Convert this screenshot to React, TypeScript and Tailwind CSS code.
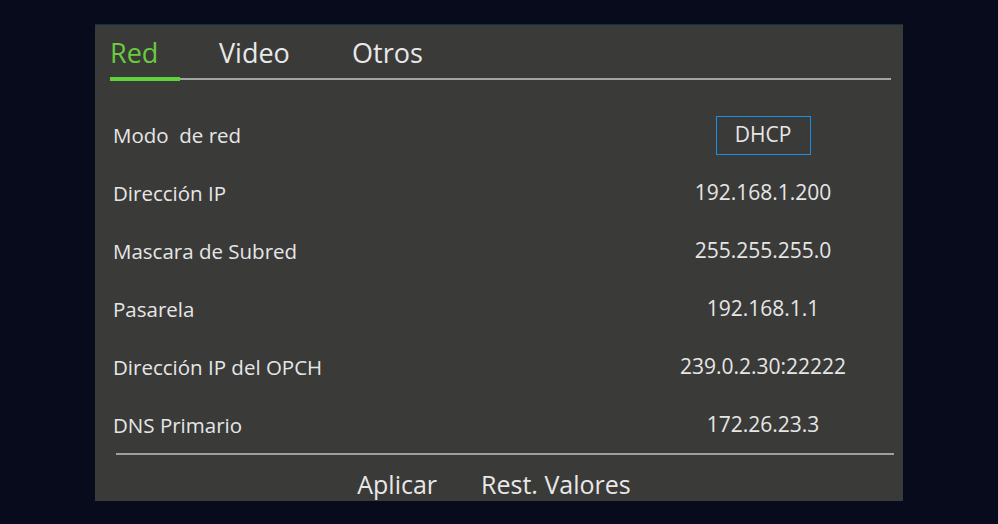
import React from "react";

const rows: { label: string; value: string; boxed?: boolean }[] = [
  { label: "Modo  de red", value: "DHCP", boxed: true },
  { label: "Dirección IP", value: "192.168.1.200" },
  { label: "Mascara de Subred", value: "255.255.255.0" },
  { label: "Pasarela", value: "192.168.1.1" },
  { label: "Dirección IP del OPCH", value: "239.0.2.30:22222" },
  { label: "DNS Primario", value: "172.26.23.3" },
];

export default function App() {
  return (
    <div
      className="w-[998px] h-[524px] bg-[#080b1b] overflow-hidden pt-[24px] pl-[95px]"
      style={{ fontFamily: '"Open Sans", "Noto Sans", sans-serif' }}
    >
      <div className="w-[808px] h-[477px] bg-[#3a3a39] border-t border-[#0f3344] flex flex-col overflow-hidden">
        {/* Tabs */}
        <div className="pl-[15px] pr-[12px] pt-[6px]">
          <div className="flex items-end h-[35px] text-[27px] leading-none text-[#e8e8e8]">
            <span className="text-[#69cc3c] w-[109px]">Red</span>
            <span className="w-[133px]">Video</span>
            <span>Otros</span>
          </div>
          <div className="relative mt-[11px] h-[4px]">
            <div className="absolute left-0 right-0 top-[1px] h-[2px] bg-[#a3a3a3]" />
            <div className="absolute left-0 top-0 w-[70px] h-[4px] bg-[#5fd33a]" />
          </div>
        </div>

        {/* Rows */}
        <div className="flex flex-col pt-[25px] pl-[18px] pr-[40px]">
          {rows.map((r) => (
            <div key={r.label} className="flex items-center h-[58px]">
              <span className="flex-1 text-[20.5px] text-[#e6e6e6] whitespace-pre">
                {r.label}
              </span>
              <div className="w-[200px] flex justify-center">
                {r.boxed ? (
                  <span className="w-[95px] h-[39px] border-[1.5px] border-[#1b8fe3] flex items-center justify-center text-[21px] text-[#e6e6e6]">
                    {r.value}
                  </span>
                ) : (
                  <span className="text-[21px] text-[#e6e6e6]">{r.value}</span>
                )}
              </div>
            </div>
          ))}
        </div>

        {/* Bottom line */}
        <div className="ml-[21px] mr-[9px] -mt-[1px] h-[2px] bg-[#a0a0a0]" />

        {/* Buttons */}
        <div className="flex justify-center gap-[44px] pr-[10px] pt-[17px] text-[25px] leading-none text-[#e8e8e8]">
          <span>Aplicar</span>
          <span>Rest. Valores</span>
        </div>
      </div>
    </div>
  );
}
